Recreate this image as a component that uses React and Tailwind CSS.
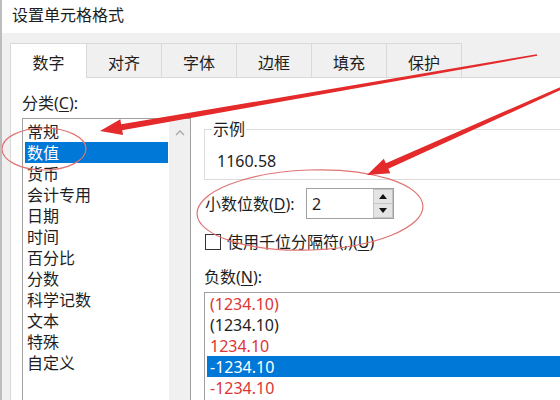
export default function App() {
  const cats = ['常规', '数值', '货币', '会计专用', '日期', '时间', '百分比', '分数', '科学记数', '文本', '特殊', '自定义'];
  const negs = [
    { t: '(1234.10)', red: true },
    { t: '(1234.10)' },
    { t: '1234.10', red: true },
    { t: '-1234.10', sel: true },
    { t: '-1234.10', red: true },
  ];
  const tabs = ['对齐', '字体', '边框', '填充', '保护'];
  return (
    <div className="relative w-[560px] h-[400px] overflow-hidden bg-white border-l-2 border-[#bdbdbd] flex flex-col text-[16px] leading-[20px] text-[#1e1e1e] font-['Noto_Sans','Noto_Sans_CJK_SC',sans-serif]">
      <div className="h-[33px] shrink-0 flex items-center pl-[10px] pb-[4px]">设置单元格格式</div>
      <div className="flex-1 flex flex-col bg-[#f0f0f0] pl-[8px] pt-[10px]">
        <div className="flex h-[35px] shrink-0">
          <div className="w-[77px] h-[35px] bg-white border-l border-t border-r border-[#d9d9d9] flex items-center justify-center pt-[4px]">数字</div>
          {tabs.map((t) => (
            <div key={t} className="w-[75px] h-[35px] border-t border-r border-b border-[#d9d9d9] flex items-center justify-center pt-[4px]">{t}</div>
          ))}
          <div className="flex-1 border-b border-[#d9d9d9]" />
        </div>
        <div className="flex-1 flex bg-white border-l border-[#d9d9d9] pt-[15px] pl-[11px]">
          <div className="w-[169px] shrink-0 flex flex-col">
            <div className="h-[20px]">分类(<span className="underline underline-offset-2">C</span>):</div>
            <div className="mt-[5px] h-[300px] border border-[#a0a0a0] flex">
              <div className="flex-1 flex flex-col pt-[2px]">
                {cats.map((c, i) => (
                  <div key={c} className={`h-[21px] ml-[2px] mr-[1px] pl-[2px] flex items-center ${i === 1 ? 'bg-[#0078d7] text-white' : ''}`}>{c}</div>
                ))}
              </div>
              <div className="w-[21px] bg-[#f0f0f0] flex flex-col">
                <div className="h-[24px] flex items-center justify-center pt-[4px]">
                  <svg width="10" height="6" viewBox="0 0 10 6"><polyline points="1,5 5,1 9,5" fill="none" stroke="#a6a6a6" strokeWidth="1.3" /></svg>
                </div>
              </div>
            </div>
          </div>
          <div className="ml-[13px] w-[380px] shrink-0 mt-[36px] flex flex-col">
            <div className="border border-[#dcdcdc] h-[51px] pl-[12px]">
              <div className="-mt-[11px] -ml-[5px] w-fit px-[1px] bg-white">示例</div>
              <div className="mt-[12px]">1160.58</div>
            </div>
            <div className="mt-[8px] h-[31px] flex items-center">
              <div className="w-[102px] pl-[1px]">小数位数(<span className="underline underline-offset-2">D</span>):</div>
              <div className="w-[88px] h-[31px] border border-[#a0a0a0] flex">
                <div className="flex-1 flex items-center pl-[5px]">2</div>
                <div className="w-[20px] flex flex-col">
                  <div className="flex-1 border border-[#c4c4c4] bg-[#e4e4e4] flex items-center justify-center">
                    <svg width="8" height="5" viewBox="0 0 8 5"><polygon points="0,5 4,0 8,5" fill="#111" /></svg>
                  </div>
                  <div className="flex-1 border-x border-b border-[#c4c4c4] bg-[#e4e4e4] flex items-center justify-center">
                    <svg width="8" height="5" viewBox="0 0 8 5"><polygon points="0,0 8,0 4,5" fill="#111" /></svg>
                  </div>
                </div>
              </div>
            </div>
            <div className="mt-[15px] h-[16px] flex items-center">
              <div className="ml-[1px] w-[16px] h-[16px] border border-[#333] bg-white" />
              <div className="ml-[6px]">使用千位分隔符(,)(<span className="underline underline-offset-2">U</span>)</div>
            </div>
            <div className="mt-[17px] h-[20px]">负数(<span className="underline underline-offset-2">N</span>):</div>
            <div className="mt-[5px] h-[200px] border border-[#a0a0a0] flex flex-col">
              {negs.map((n, i) => (
                <div key={i} className={`h-[21px] ml-[2px] pl-[3px] flex items-center ${n.sel ? 'bg-[#0078d7] text-white' : n.red ? 'text-[#dc3535]' : ''}`}>{n.t}</div>
              ))}
            </div>
          </div>
        </div>
      </div>
      <svg className="absolute -left-[2px] top-0 pointer-events-none" width="560" height="400" viewBox="0 0 560 400">
        <ellipse cx="44" cy="149" rx="42" ry="21" fill="none" stroke="#e07474" strokeWidth="1.2" />
        <ellipse cx="310" cy="210" rx="113" ry="40" fill="none" stroke="#e07474" strokeWidth="1.2" transform="rotate(-2 310 210)" />
        <polygon points="100,131 123.04,135.12 122.18,130.2 537.14,55.79 536.86,54.21 121.16,124.29 120.3,119.36" fill="#e42a2a" />
        <polygon points="367,175 390.35,173.32 388.31,168.76 575.49,83.1 574.51,80.9 385.87,163.28 383.83,158.72" fill="#e42a2a" />
      </svg>
    </div>
  );
}
